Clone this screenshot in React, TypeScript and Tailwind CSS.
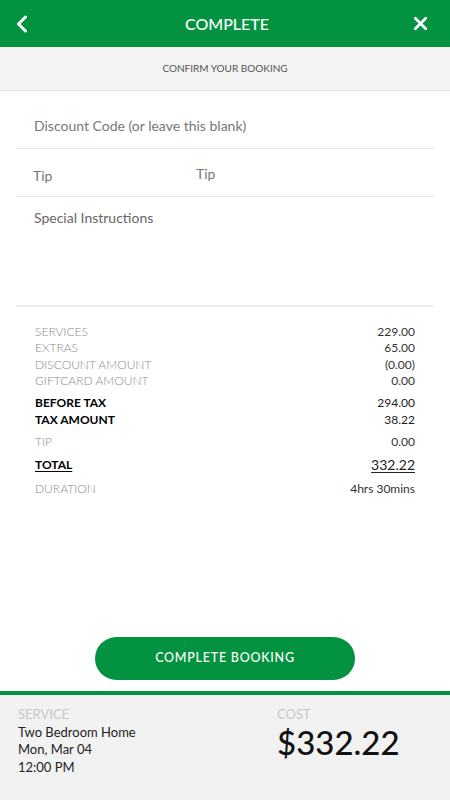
import { ChevronLeft, X } from "lucide-react"

const rows1 = [
  { label: "SERVICES", value: "229.00" },
  { label: "EXTRAS", value: "65.00" },
  { label: "DISCOUNT AMOUNT", value: "(0.00)" },
  { label: "GIFTCARD AMOUNT", value: "0.00" },
]

const rows2 = [
  { label: "BEFORE TAX", value: "294.00" },
  { label: "TAX AMOUNT", value: "38.22" },
]

export default function App() {
  return (
    <div
      className="flex h-[800px] w-[450px] flex-col overflow-hidden bg-white"
      style={{ fontFamily: "Lato, 'Open Sans', sans-serif" }}
    >
      {/* header */}
      <header className="flex h-[47px] items-center justify-between bg-[#03923f] pl-[8px] pr-[19px] text-white">
        <ChevronLeft size={28} strokeWidth={2.6} />
        <h1 className="pl-[8px] text-[16px] font-medium">COMPLETE</h1>
        <X size={21} strokeWidth={3.2} />
      </header>
      <div className="flex h-[44px] items-center justify-center border-b border-[#e3e3e3] bg-[#f3f3f3] text-[10px] text-[#555]">
        CONFIRM YOUR BOOKING
      </div>

      {/* form */}
      <div className="px-4">
        <div className="flex h-[58px] items-center border-b border-[#e5e5e5] pl-[18px] pt-[12px] text-[14px] text-[#777]">
          Discount Code (or leave this blank)
        </div>
        <div className="flex h-[48px] items-center border-b border-[#e5e5e5] pl-[17px] text-[14px] text-[#777]">
          <span className="w-[163px] pt-[5px]">Tip</span>
          <span className="pt-[2px]">Tip</span>
        </div>
        <div className="h-[110px] border-b-2 border-[#ededed] pl-[18px] pt-[10px] text-[14px] text-[#666]">
          Special Instructions
        </div>
      </div>

      {/* summary */}
      <div className="px-[35px] pt-[17px] text-[12px]">
        {rows1.map((r) => (
          <div key={r.label} className="flex h-[16.3px] items-center justify-between">
            <span className="font-light text-[#8a8a8a]">{r.label}</span>
            <span className="text-[#333]">{r.value}</span>
          </div>
        ))}
        <div className="mt-[6px]">
          {rows2.map((r) => (
            <div key={r.label} className="flex h-[16.3px] items-center justify-between">
              <span className="font-bold text-black">{r.label}</span>
              <span className="text-[#222]">{r.value}</span>
            </div>
          ))}
        </div>
        <div className="mt-[6px] flex h-[16px] items-center justify-between">
          <span className="font-light text-[#8a8a8a]">TIP</span>
          <span className="text-[#333]">0.00</span>
        </div>
        <div className="mt-[7px] flex h-[16px] items-center justify-between">
          <span className="font-bold text-black underline underline-offset-2">TOTAL</span>
          <span className="text-[14px] text-[#222] underline underline-offset-2">332.22</span>
        </div>
        <div className="mt-[8px] flex h-[16px] items-center justify-between">
          <span className="font-light text-[#8a8a8a]">DURATION</span>
          <span className="text-[#333]">4hrs 30mins</span>
        </div>
      </div>

      <div className="flex-1" />

      {/* button */}
      <div className="flex justify-center pb-[11px]">
        <button className="h-[43px] w-[260px] rounded-full bg-[#03923f] text-[12.5px] font-medium tracking-[0.06em] text-white">
          COMPLETE BOOKING
        </button>
      </div>

      {/* footer */}
      <footer className="flex h-[109px] border-t-4 border-[#03923f] bg-[#f2f2f2] pt-[11px]">
        <div className="w-[277px] pl-[18px]">
          <div className="text-[13px] leading-[17.5px] text-[#c8c8c8]">SERVICE</div>
          <div className="text-[13px] leading-[17.5px] text-[#222]">
            <div>Two Bedroom Home</div>
            <div>Mon, Mar 04</div>
            <div>12:00 PM</div>
          </div>
        </div>
        <div>
          <div className="text-[13px] leading-[17.5px] text-[#c8c8c8]">COST</div>
          <div className="-mt-[1px] text-[33px] font-medium leading-[38px] text-[#111]">$332.22</div>
        </div>
      </footer>
    </div>
  )
}
